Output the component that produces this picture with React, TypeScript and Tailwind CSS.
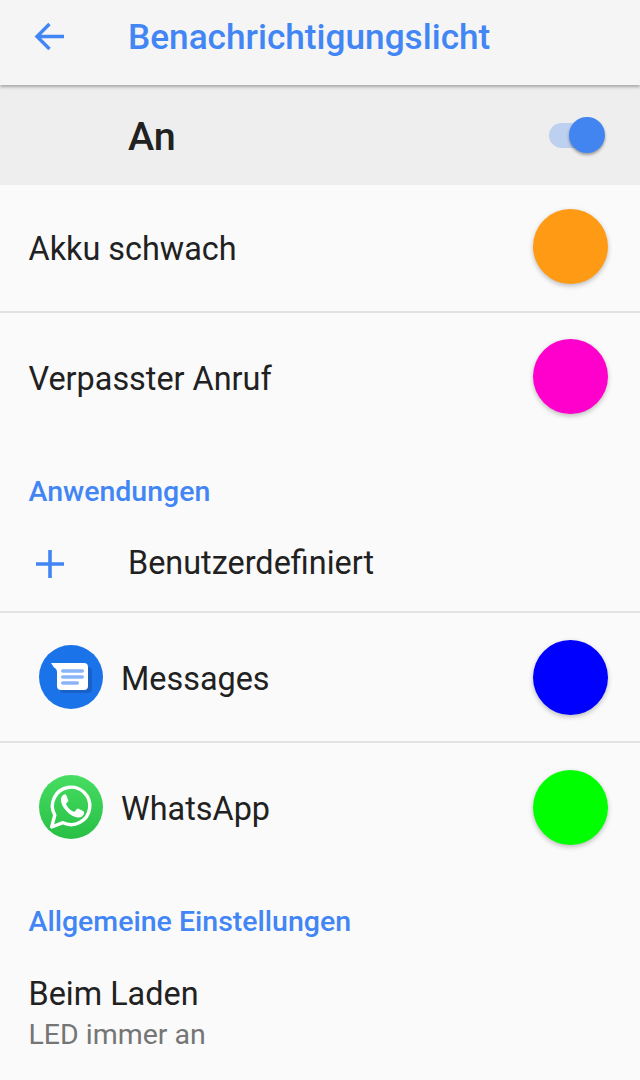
import type { ReactNode } from "react"

const roboto = { fontFamily: "Roboto, sans-serif" }

function Dot({ color, className = "" }: { color: string; className?: string }) {
  return (
    <div
      className={`h-[75px] w-[75px] shrink-0 rounded-full shadow-[0_2px_5px_rgba(0,0,0,0.25)] ${className}`}
      style={{ backgroundColor: color }}
    />
  )
}

function Divider() {
  return <div className="h-[2px] bg-[#e2e2e2]" />
}

function ColorRow({ label, color, height }: { label: string; color: string; height: string }) {
  return (
    <div className={`flex items-center justify-between pl-[28.5px] pr-[32px] ${height}`}>
      <span className="pt-[2px] text-[32.4px] leading-none text-[#212121]">{label}</span>
      <Dot color={color} className="mb-[3px]" />
    </div>
  )
}

function AppRow({ icon, label, color }: { icon: ReactNode; label: string; color: string }) {
  return (
    <div className="flex h-[128px] items-center pl-[39px] pr-[32px]">
      {icon}
      <span className="ml-[18px] flex-1 pt-[6px] text-[32.4px] leading-none text-[#212121]">{label}</span>
      <Dot color={color} className="mt-[1px]" />
    </div>
  )
}

function SectionLabel({ children, className }: { children: ReactNode; className: string }) {
  return <div className={`pl-[28.5px] text-[28.5px] font-medium leading-none text-[#4285f4] ${className}`}>{children}</div>
}

function MessagesIcon() {
  return (
    <svg width="64" height="64" viewBox="0 0 64 64" className="shrink-0">
      <circle cx="32" cy="32" r="32" fill="#1a73e8" />
      <path d="M20 22 H49 a4 4 0 0 1 4 4 V44 a4 4 0 0 1-4 4 H25 a4 4 0 0 1-4-4 Z" fill="#174ea6" opacity="0.5" />
      <path d="M12 18 H45 a4 4 0 0 1 4 4 V41 a4 4 0 0 1-4 4 H22 a4 4 0 0 1-4-4 V27 Q18 24 15 22.5 Z" fill="#ffffff" />
      <rect x="22" y="24.3" width="23" height="3.4" rx="1.7" fill="#8ab4f8" />
      <rect x="22" y="30.3" width="23" height="3.4" rx="1.7" fill="#8ab4f8" />
      <rect x="22" y="36.3" width="18" height="3.4" rx="1.7" fill="#8ab4f8" />
    </svg>
  )
}

function WhatsAppIcon() {
  return (
    <svg width="64" height="64" viewBox="0 0 64 64" className="shrink-0">
      <defs>
        <linearGradient id="wa" x1="0" y1="0" x2="0" y2="1">
          <stop offset="0" stopColor="#47dd63" />
          <stop offset="1" stopColor="#28bf45" />
        </linearGradient>
      </defs>
      <circle cx="32" cy="32" r="32" fill="url(#wa)" />
      <path
        d="M12.7 52 L15.8 40 A18.7 18.7 0 1 1 24 47.7 Z"
        fill="none"
        stroke="#ffffff"
        strokeWidth="3.4"
        strokeLinejoin="round"
      />
      <path
        d="M25 19.5 C23 20.5 21.5 23 22 26 C23 33 31 41.5 38.5 42.5 C41.5 43 44.5 41 45 38.5 C45.3 37 45 36.5 44 36 L39.5 33.8 C38.7 33.4 38.2 33.6 37.7 34.2 L36 36.3 C35.5 36.9 35 36.9 34.2 36.5 C31 35 28.8 32.8 27.3 29.8 C27 29.1 27 28.7 27.5 28.2 L29 26.4 C29.4 25.9 29.4 25.4 29.2 24.9 L27.4 20.4 C27 19.4 26 19.1 25 19.5 Z"
        fill="#ffffff"
      />
    </svg>
  )
}

export default function App() {
  return (
    <div className="h-[1080px] w-[640px] overflow-hidden bg-[#fafafa]" style={roboto}>
      {/* App bar */}
      <header className="relative z-10 flex h-[85px] items-center bg-[#f5f5f5] pb-[11px] shadow-[0_2px_3px_rgba(0,0,0,0.3)]">
        <svg width="32" height="32" viewBox="0 0 32 32" className="ml-[34px] shrink-0" fill="none" stroke="#4285f4" strokeWidth="3.4">
          <path d="M30 15.5 H3.5 M15.5 3 L3 15.5 L15.5 28" />
        </svg>
        <h1 className="ml-[62px] pt-[2px] text-[35.2px] font-medium leading-none text-[#4285f4]">Benachrichtigungslicht</h1>
      </header>

      {/* Master switch */}
      <div className="flex h-[100px] items-center bg-[#eeeeee] pl-[128px] pr-[45px]">
        <span className="flex-1 pt-[4px] text-[39.5px] font-medium leading-none text-[#212121]">An</span>
        <div className="relative h-[25px] w-[46px]">
          <div className="h-[25px] w-[46px] rounded-full bg-[#bdd0f0]" />
          <div className="absolute right-[-10px] top-[-6px] h-[36px] w-[36px] rounded-full bg-[#4285f0] shadow-[0_2px_3px_rgba(0,0,0,0.35)]" />
        </div>
      </div>

      <ColorRow label="Akku schwach" color="#ff9a14" height="h-[126px]" />
      <Divider />
      <ColorRow label="Verpasster Anruf" color="#ff00cc" height="h-[130px]" />

      <SectionLabel className="pt-[35px]">Anwendungen</SectionLabel>
      <div className="flex h-[104px] items-center pl-[36px] pt-[10px]">
        <svg width="28" height="28" viewBox="0 0 28 28" className="shrink-0" stroke="#4285f4" strokeWidth="3.6">
          <path d="M0 14 H28 M14 0 V28" />
        </svg>
        <span className="ml-[64px] text-[32.4px] leading-none text-[#212121]">Benutzerdefiniert</span>
      </div>
      <Divider />
      <AppRow icon={<MessagesIcon />} label="Messages" color="#0000ff" />
      <Divider />
      <AppRow icon={<WhatsAppIcon />} label="WhatsApp" color="#00ff00" />

      <SectionLabel className="pt-[37px]">Allgemeine Einstellungen</SectionLabel>
      <div className="pl-[28.5px] pt-[42px]">
        <div className="text-[32.4px] leading-none text-[#212121]">Beim Laden</div>
        <div className="mt-[11px] text-[28.5px] leading-none text-[#757575]">LED immer an</div>
      </div>
    </div>
  )
}
